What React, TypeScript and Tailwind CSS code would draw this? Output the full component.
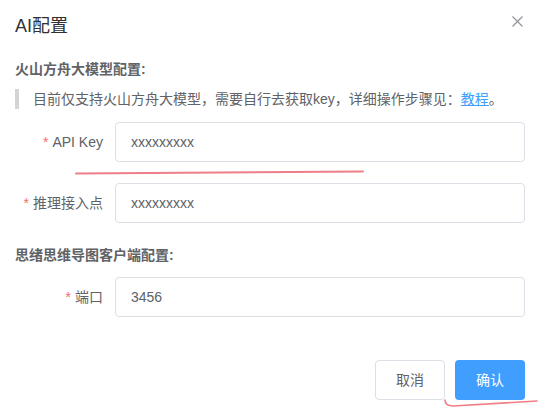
import React from "react";

const font = { fontFamily: '"Liberation Sans", "Noto Sans CJK SC", sans-serif' };

function Field({ label, value }: { label: string; value: string }) {
  return (
    <div className="flex items-center">
      <label className="w-[100px] shrink-0 pr-[12px] text-right text-[14px] leading-10 text-[#606266]">
        <span className="mr-[4px] text-[#f56c6c]">*</span>
        {label}
      </label>
      <div className="flex h-[40px] flex-1 items-center rounded-[4px] border border-[#dcdfe6] bg-white px-[15px] text-[14px] text-[#606266]">
        {value}
      </div>
    </div>
  );
}

export default function App() {
  return (
    <div style={font} className="relative h-[414px] w-[539px] overflow-hidden bg-white">
      <header className="flex items-center justify-between pl-[15px] pr-[14px] pt-[14px]">
        <h2 className="text-[18px] leading-6 text-[#303133]">AI配置</h2>
        <button className="absolute right-[16px] top-[16px] text-[#909399]">
          <svg width="11" height="11" viewBox="0 0 11 11" fill="none" stroke="currentColor" strokeWidth="1.2">
            <path d="M0.5 0.5 L10.5 10.5 M10.5 0.5 L0.5 10.5" />
          </svg>
        </button>
      </header>

      <div className="pl-[15px] pr-[14px] pt-[21px]">
        <h3 className="text-[14px] font-bold leading-5 text-[#606266]">火山方舟大模型配置:</h3>
        <div className="mt-[10px] flex items-center">
          <span className="h-[20px] w-[4px] bg-[#d3d3d3]" />
          <p className="ml-[14px] text-[14px] leading-5 text-[#606266]">
            目前仅支持火山方舟大模型，需要自行去获取key，详细操作步骤见：
            <a href="#" className="text-[#409eff] underline">
              教程
            </a>
            。
          </p>
        </div>

        <div className="mt-[13px] flex flex-col gap-[21px]">
          <Field label="API Key" value="xxxxxxxxx" />
          <Field label="推理接入点" value="xxxxxxxxx" />
        </div>

        <h3 className="mt-[22px] text-[14px] font-bold leading-5 text-[#606266]">思绪思维导图客户端配置:</h3>
        <div className="mt-[12px]">
          <Field label="端口" value="3456" />
        </div>

        <div className="mt-[43px] flex justify-end gap-[10px]">
          <button className="h-[40px] w-[70px] rounded-[4px] border border-[#dcdfe6] bg-white text-[14px] text-[#606266]">
            取消
          </button>
          <button className="h-[40px] w-[70px] rounded-[4px] bg-[#409eff] text-[14px] text-white">
            确认
          </button>
        </div>
      </div>

      {/* hand-drawn marks over the screenshot */}
      <svg className="pointer-events-none absolute inset-0" width="539" height="414" fill="none">
        <path d="M76 173.5 L363 171.5" stroke="#ef7f86" strokeWidth="2" strokeLinecap="round" />
        <path d="M445 400 Q445 406 453 406 L537 401" stroke="#ef7f86" strokeWidth="1.6" strokeLinecap="round" />
      </svg>
    </div>
  );
}
